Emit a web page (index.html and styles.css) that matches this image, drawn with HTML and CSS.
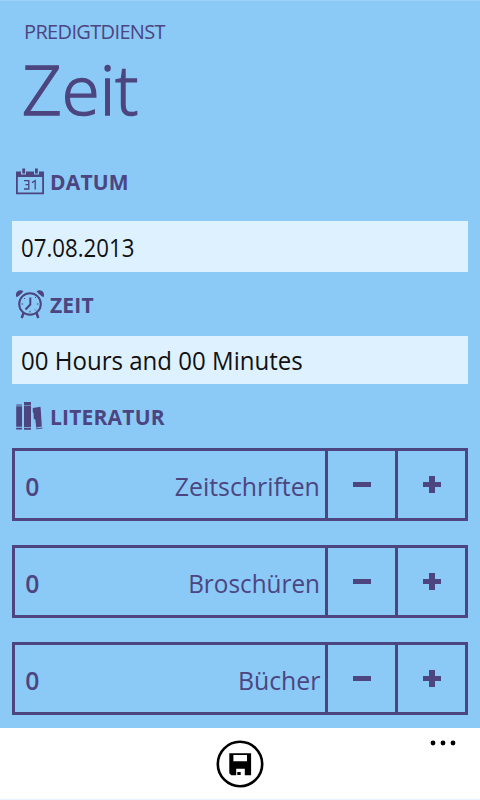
FILE: index.html
```html
<!DOCTYPE html>
<html lang="de">
<head>
<meta charset="utf-8">
<title>Zeit</title>
<link rel="stylesheet" href="styles.css">
</head>
<body>
<main class="page">
  <header class="header">
    <div class="app-name"><span>PREDIGTDIENST</span></div>
    <h1 class="title"><span>Zeit</span></h1>
  </header>

  <h2 class="label label-date">
    <svg class="icon" width="30" height="30" viewBox="0 0 30 30">
      <path fill="currentColor" fill-rule="evenodd" d="M1 4.5h5v3h5v-3h8v3h5v-3h5v22.8H1zM2.8 10v15.6h24.4V10z"/>
      <path fill="currentColor" d="M7.3 1.6h2.8V6.4H7.3zM20 1.6h2.8V6.4H20z"/>
      <path fill="none" stroke="currentColor" stroke-width="1.3" d="M9 13.7h4.8v4h-3.3 3.3v4.3H9M17 15.6l3.2-1.9V22.6"/>
    </svg>
    <span>DATUM</span>
  </h2>
  <div class="field field-date"><span class="date">07.08.2013</span></div>

  <h2 class="label label-time">
    <svg class="icon" width="30" height="30" viewBox="0 0 30 30">
      <circle cx="15" cy="14" r="10.8" fill="none" stroke="currentColor" stroke-width="2"/>
      <path fill="currentColor" d="M1.6 7.3C-1 2.5 4.5-2 8.4 1.3L6.8 3.2 3.6 6zM28.4 7.3C31 2.5 25.5-2 21.6 1.3L23.2 3.2 26.4 6z"/>
      <path fill="none" stroke="currentColor" stroke-width="2.5" d="M8.7 22.5L6.7 28M21.3 22.5l2 5.5"/>
      <path fill="none" stroke="currentColor" stroke-width="2" d="M15.3 7.5v7l-4.8 5"/>
      <path fill="none" stroke="currentColor" stroke-width="1" d="M6.5 14h1.7M21.8 14h1.7M15 20.8v1.7M20 8l1-1M20 19.5l1 1M9 8l1 1"/>
    </svg>
    <span>ZEIT</span>
  </h2>
  <div class="field field-time"><span class="duration">00 Hours and 00 Minutes</span></div>

  <h2 class="label label-books">
    <svg class="icon" width="30" height="30" viewBox="0 0 30 30">
      <path fill="currentColor" d="M1.2 2.4h5.8v1H1.2zM1.2 4.2h5.8v20.6H1.2zM1.2 25.8h5.8v1.8H1.2zM9 0h7v3.4H9zM9 4h7v21.2H9zM9 25.9h7v1.9H9zM17.8 6l7.6-1.2.3 2 1.1 17.6-5.6 1-.9-8-1.5-.5-.3-6-.7-1zM20.8 26.5l6.6-1 .1.9-6.5.9z"/>
    </svg>
    <span>LITERATUR</span>
  </h2>

  <section class="counters">
    <div class="counter">
      <div class="amount"><span class="value">0</span><span class="name">Zeitschriften</span></div>
      <div class="step"><i class="minus"></i></div>
      <div class="step"><i class="plus"></i></div>
    </div>
    <div class="counter">
      <div class="amount"><span class="value">0</span><span class="name name-narrow">Broschüren</span></div>
      <div class="step"><i class="minus"></i></div>
      <div class="step"><i class="plus"></i></div>
    </div>
    <div class="counter">
      <div class="amount"><span class="value">0</span><span class="name">Bücher</span></div>
      <div class="step"><i class="minus"></i></div>
      <div class="step"><i class="plus"></i></div>
    </div>
  </section>
</main>
<footer class="appbar">
  <svg class="save" width="48" height="48" viewBox="0 0 48 48">
    <circle cx="24" cy="24" r="22.2" fill="none" stroke="#000" stroke-width="2.6"/>
    <path fill="#000" fill-rule="evenodd" d="M13.3 13.2h21.8v22H28.8v-6.4h-8.6v6.4h-4.9l-2-2zM17.4 15v6.2h13.6V15z"/>
    <path fill="#000" d="M21.3 32h3.4v3h-3.4z"/>
  </svg>
  <svg class="more" width="26" height="6" viewBox="0 0 26 6">
    <circle cx="3" cy="3" r="2.4"/><circle cx="13" cy="3" r="2.4"/><circle cx="23" cy="3" r="2.4"/>
  </svg>
</footer>
</body>
</html>
```
FILE: styles.css
```css
* { box-sizing: border-box; }
body {
  margin: 0;
  width: 480px;
  height: 800px;
  overflow: hidden;
  display: flex;
  flex-direction: column;
  background: #8bc9f7;
  color: #4c457f;
  font-family: "Open Sans", "Noto Sans", sans-serif;
}
.page {
  height: 728px;
  padding: 19px 12px 0;
  border-top: 1px solid #9cd2fa;
}
.header {
  display: flex;
  flex-direction: column;
  height: 147px;
  padding-left: 12px;
}
.app-name { font-size: 20px; line-height: 24px; letter-spacing: -0.65px; }
.title {
  margin: 8px 0 0 -2px;
  font-size: 69px;
  line-height: 72px;
  font-weight: 300;
  letter-spacing: 0;
  -webkit-text-stroke: 1.5px #4c457f;
}
.label {
  display: flex;
  align-items: center;
  gap: 5px;
  height: 30px;
  margin: 0;
  padding-left: 3px;
  font-size: 21px;
  line-height: 30px;
  font-weight: 700;
  letter-spacing: 0.2px;
}
.icon { flex: none; overflow: visible; }
.field {
  display: flex;
  align-items: center;
  padding-left: 9px;
  background: #def1ff;
  color: #111;
  font-size: 25px;
  line-height: 36px;
}
.date, .duration { transform-origin: left; }
.date { transform: scaleX(0.89); }
.duration { transform: scaleX(0.962); }
.field-date { height: 51px; margin-top: 24px; }
.label-time { margin-top: 18px; }
.field-time { height: 48px; margin-top: 16px; }
.label-books { margin-top: 18px; }
.counters { display: grid; gap: 24px; margin-top: 16px; }
.counter {
  display: grid;
  grid-template-columns: 1fr 70px 70px;
  height: 73px;
  border: 3px solid #4c457f;
}
.amount {
  display: flex;
  align-items: center;
  justify-content: space-between;
  padding: 3px 5px 0 10px;
  font-size: 26px;
}
.value { font-weight: 600; transform: scaleX(0.95); }
.name { transform: scaleX(0.955); transform-origin: right; }
.name-narrow { transform: scaleX(0.935); }
.step {
  display: grid;
  place-items: center;
  border-left: 3px solid #4c457f;
}
.minus, .plus { width: 18px; height: 5px; background: #4c457f; }
.plus { display: flex; align-items: center; justify-content: center; }
.plus::after { content: ""; flex: none; width: 6px; height: 17px; background: #4c457f; }
.appbar {
  position: relative;
  display: flex;
  justify-content: center;
  height: 72px;
  padding-top: 12px;
  background: #fff;
  border-bottom: 1px solid #e8f4fd;
}
.more { position: absolute; top: 12px; right: 24px; }
```
